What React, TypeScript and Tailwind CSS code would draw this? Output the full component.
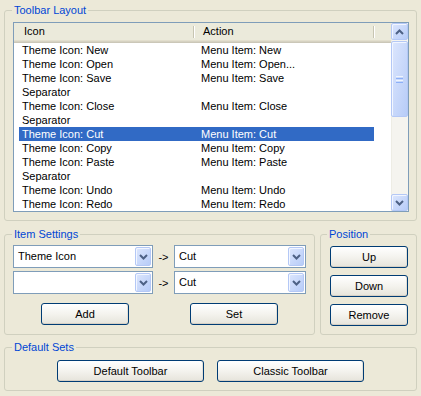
import React from "react";

const rows: { icon: string; action: string; sel?: boolean }[] = [
  { icon: "Theme Icon: New", action: "Menu Item: New" },
  { icon: "Theme Icon: Open", action: "Menu Item: Open..." },
  { icon: "Theme Icon: Save", action: "Menu Item: Save" },
  { icon: "Separator", action: "" },
  { icon: "Theme Icon: Close", action: "Menu Item: Close" },
  { icon: "Separator", action: "" },
  { icon: "Theme Icon: Cut", action: "Menu Item: Cut", sel: true },
  { icon: "Theme Icon: Copy", action: "Menu Item: Copy" },
  { icon: "Theme Icon: Paste", action: "Menu Item: Paste" },
  { icon: "Separator", action: "" },
  { icon: "Theme Icon: Undo", action: "Menu Item: Undo" },
  { icon: "Theme Icon: Redo", action: "Menu Item: Redo" },
];

function Chevron({ up }: { up?: boolean }) {
  return (
    <svg width="9" height="6" viewBox="0 0 9 6">
      <path
        d={up ? "M1 5 L4.5 1.5 L8 5" : "M1 1 L4.5 4.5 L8 1"}
        fill="none"
        stroke="#4D6185"
        strokeWidth="2"
      />
    </svg>
  );
}

function BlueBox({ className, children }: { className?: string; children?: React.ReactNode }) {
  return (
    <div
      className={`flex items-center justify-center rounded-[2px] border border-[#B4C8F6] bg-linear-to-br from-[#DCE6FD] to-[#B7CCF8] shadow-[inset_1px_1px_0_#F2F6FF] ${className ?? ""}`}
    >
      {children}
    </div>
  );
}

function XPButton({ children, className }: { children: React.ReactNode; className?: string }) {
  return (
    <button
      className={`h-[22px] rounded-[3px] border border-[#003C74] bg-linear-to-b from-white via-[#F4F3EE] to-[#E6E4DB] text-[11px] leading-[20px] text-black shadow-[inset_0_-1px_0_#D6D0C5,inset_-1px_0_0_#E3E0D6] ${className ?? ""}`}
    >
      {children}
    </button>
  );
}

function Combo({ value, className }: { value: string; className: string }) {
  return (
    <div className={`flex h-[23px] border border-[#7F9DB9] bg-white ${className}`}>
      <div className="flex-1 pl-[4px] text-[11px] leading-[21px] text-black">{value}</div>
      <BlueBox className="m-[1px] w-[16px]">
        <Chevron />
      </BlueBox>
    </div>
  );
}

function Legend({ children, className }: { children: React.ReactNode; className?: string }) {
  return (
    <legend className={`px-[2px] text-[11px] leading-[13px] text-[#0046D5] ${className ?? ""}`}>
      {children}
    </legend>
  );
}

export default function App() {
  return (
    <div className="flex h-[396px] w-[421px] flex-col bg-[#ECE9D8] px-[4px] pt-[4px] font-['Liberation_Sans',Arial,sans-serif] text-[11px] text-black">
      {/* Toolbar Layout */}
      <fieldset className="h-[217px] rounded-[3px] border border-[#D0D0BF] pl-[8px] pr-[7px] pt-[5px]">
        <Legend className="-ml-[1px]">Toolbar Layout</Legend>
        <div className="flex h-[190px] border border-[#7F9DB9] bg-white">
          <div className="flex min-w-0 flex-1 flex-col overflow-hidden">
            {/* header */}
            <div className="flex h-[20px] shrink-0 bg-[#EBEADB] shadow-[inset_0_-1px_0_#CBC7B8,inset_0_-2px_0_#D6D2C2,inset_0_-3px_0_#E2DECD]">
              <div className="flex w-[181px] items-start">
                <div className="flex-1 pl-[10px] leading-[17px]">Icon</div>
                <div className="mt-[3px] h-[12px] w-[1px] bg-[#C7C5B2]" />
                <div className="mt-[3px] h-[12px] w-[1px] bg-white" />
              </div>
              <div className="flex w-[180px] items-start">
                <div className="flex-1 pl-[8px] leading-[17px]">Action</div>
                <div className="mt-[3px] h-[12px] w-[1px] bg-[#C7C5B2]" />
                <div className="mt-[3px] h-[12px] w-[1px] bg-white" />
              </div>
            </div>
            {/* rows */}
            <div className="flex flex-col">
              {rows.map((r, i) => (
                <div
                  key={i}
                  className={`ml-[5px] flex h-[14px] w-[355px] shrink-0 leading-[14px] ${
                    r.sel ? "bg-[#316AC5] text-white" : "text-black"
                  }`}
                >
                  <div className="w-[179px] pl-[3px]">{r.icon}</div>
                  <div className="pl-[3px]">{r.action}</div>
                </div>
              ))}
            </div>
          </div>
          {/* scrollbar */}
          <div className="flex w-[17px] shrink-0 flex-col bg-[#F5F4EF] shadow-[inset_1px_0_0_#EEEDE5]">
            <BlueBox className="h-[17px] w-[17px]">
              <Chevron up />
            </BlueBox>
            <BlueBox className="mt-[1px] h-[76px] w-[17px] flex-col gap-[1px]">
              <div className="h-[1px] w-[7px] bg-[#EEF4FE]" />
              <div className="h-[1px] w-[7px] bg-[#8CB0F8]" />
              <div className="h-[1px] w-[7px] bg-[#EEF4FE]" />
              <div className="h-[1px] w-[7px] bg-[#8CB0F8]" />
            </BlueBox>
            <div className="flex-1" />
            <BlueBox className="h-[17px] w-[17px]">
              <Chevron />
            </BlueBox>
          </div>
        </div>
      </fieldset>

      {/* Item Settings + Position */}
      <div className="mt-[7px] flex gap-[5px]">
        <fieldset className="h-[107px] w-[311px] rounded-[3px] border border-[#D0D0BF] pl-[8px] pt-[4px]">
          <Legend className="-ml-[1px]">Item Settings</Legend>
          <div className="flex items-center">
            <Combo value="Theme Icon" className="w-[140px]" />
            <div className="w-[21px] text-center leading-[14px]">-&gt;</div>
            <Combo value="Cut" className="w-[132px]" />
          </div>
          <div className="mt-[3px] flex items-center">
            <Combo value="" className="w-[140px]" />
            <div className="w-[21px] text-center leading-[14px]">-&gt;</div>
            <Combo value="Cut" className="w-[132px]" />
          </div>
          <div className="mt-[9px] flex">
            <XPButton className="ml-[28px] w-[88px]">Add</XPButton>
            <XPButton className="ml-[61px] w-[88px]">Set</XPButton>
          </div>
        </fieldset>
        <fieldset className="h-[107px] flex-1 rounded-[3px] border border-[#D0D0BF] pl-[9px] pt-[5px]">
          <Legend className="-ml-[3px]">Position</Legend>
          <div className="flex flex-col gap-[7px]">
            <XPButton className="w-[78px]">Up</XPButton>
            <XPButton className="w-[78px]">Down</XPButton>
            <XPButton className="w-[78px]">Remove</XPButton>
          </div>
        </fieldset>
      </div>

      {/* Default Sets */}
      <fieldset className="mt-[6px] h-[50px] rounded-[3px] border border-[#D0D0BF] pl-[8px] pt-[6px]">
        <Legend className="-ml-[1px]">Default Sets</Legend>
        <div className="-ml-[8px] flex justify-center gap-[13px]">
          <XPButton className="w-[147px]">Default Toolbar</XPButton>
          <XPButton className="w-[147px]">Classic Toolbar</XPButton>
        </div>
      </fieldset>
    </div>
  );
}
